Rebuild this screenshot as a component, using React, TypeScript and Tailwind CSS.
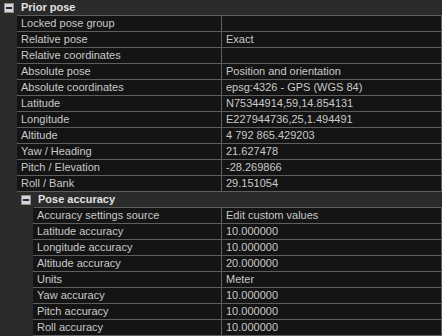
import React from "react"

type Row = { label: string; value?: string }

const priorRows: Row[] = [
  { label: "Locked pose group" },
  { label: "Relative pose", value: "Exact" },
  { label: "Relative coordinates" },
  { label: "Absolute pose", value: "Position and orientation" },
  { label: "Absolute coordinates", value: "epsg:4326 - GPS (WGS 84)" },
  { label: "Latitude", value: "N75344914,59,14.854131" },
  { label: "Longitude", value: "E227944736,25,1.494491" },
  { label: "Altitude", value: "4 792 865.429203" },
  { label: "Yaw / Heading", value: "21.627478" },
  { label: "Pitch / Elevation", value: "-28.269866" },
  { label: "Roll / Bank", value: "29.151054" },
]

const accuracyRows: Row[] = [
  { label: "Accuracy settings source", value: "Edit custom values" },
  { label: "Latitude accuracy", value: "10.000000" },
  { label: "Longitude accuracy", value: "10.000000" },
  { label: "Altitude accuracy", value: "20.000000" },
  { label: "Units", value: "Meter" },
  { label: "Yaw accuracy", value: "10.000000" },
  { label: "Pitch accuracy", value: "10.000000" },
  { label: "Roll accuracy", value: "10.000000" },
]

function MinusBox() {
  return (
    <div className="w-[10px] h-[10px] border border-[#8a8a8a] bg-[#d4d4d4] flex items-center justify-center shrink-0">
      <div className="w-[6px] h-[2px] bg-[#1e2a4a]" />
    </div>
  )
}

function GroupHeader({ title, indent }: { title: string; indent: string }) {
  return (
    <div className="flex h-4">
      <div className={`${indent} h-full`} />
      <div className="flex-1 flex items-center h-full">
        <div className="w-[17px] h-full flex items-center pl-[4px]">
          <MinusBox />
        </div>
        <div className="flex-1 h-full border-b border-[#5e5e5e] flex items-center pl-[4px] font-bold text-[#e2e2e2]">
          {title}
        </div>
      </div>
    </div>
  )
}

function PropRow({ row, indent }: { row: Row; indent: string }) {
  return (
    <div className="flex h-4">
      <div className={`${indent} h-full`} />
      <div className="flex-1 h-full bg-[#141414] border-b border-r border-[#5e5e5e] flex items-center pl-[4px] text-[#c9c9c9] truncate">
        {row.label}
      </div>
      <div className="w-[220px] h-full bg-[#141414] border-b border-r border-[#5e5e5e] flex items-center pl-[4px] text-[#c9c9c9] truncate">
        {row.value ?? ""}
      </div>
    </div>
  )
}

export default function App() {
  return (
    <div
      className="w-[442px] h-[336px] bg-[#2b2b2b] text-[11px] leading-none overflow-hidden"
      style={{ fontFamily: "Tahoma, 'Liberation Sans', sans-serif" }}
    >
      <GroupHeader title="Prior pose" indent="w-0" />
      {priorRows.map((r) => (
        <PropRow key={r.label} row={r} indent="w-[17px]" />
      ))}
      <GroupHeader title="Pose accuracy" indent="w-[17px]" />
      {accuracyRows.map((r) => (
        <PropRow key={r.label} row={r} indent="w-[33px]" />
      ))}
    </div>
  )
}
